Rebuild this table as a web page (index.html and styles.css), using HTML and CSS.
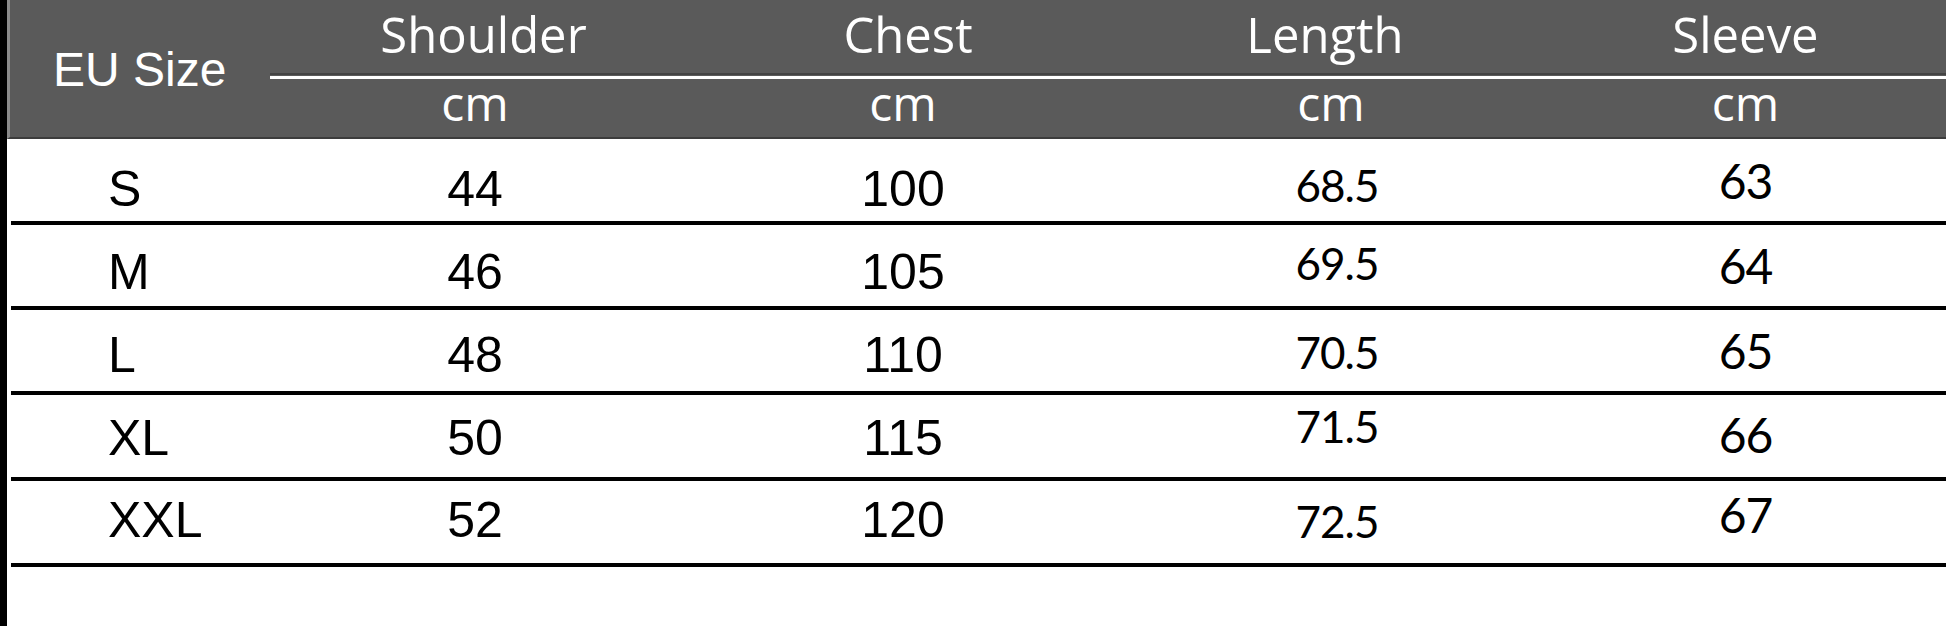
FILE: index.html
```html
<!DOCTYPE html>
<html lang="en">
<head>
<meta charset="utf-8">
<title>EU Size Chart</title>
<link rel="stylesheet" href="styles.css">
</head>
<body>
<div class="page">
  <div class="head">
    <div class="eu">EU Size</div>
    <div class="title t1">Shoulder</div>
    <div class="title t2">Chest</div>
    <div class="title t3">Length</div>
    <div class="title t4">Sleeve</div>
    <div class="divider"></div>
    <div class="unit">cm</div>
    <div class="unit">cm</div>
    <div class="unit">cm</div>
    <div class="unit">cm</div>
  </div>
  <div class="rows">
    <div class="row r1"><div class="size">S</div><div class="num">44</div><div class="num">100</div><div class="len">68.5</div><div class="slv">63</div></div>
    <div class="row r2"><div class="size">M</div><div class="num">46</div><div class="num">105</div><div class="len">69.5</div><div class="slv">64</div></div>
    <div class="row r3"><div class="size">L</div><div class="num">48</div><div class="num">110</div><div class="len">70.5</div><div class="slv">65</div></div>
    <div class="row r4"><div class="size">XL</div><div class="num">50</div><div class="num">115</div><div class="len">71.5</div><div class="slv">66</div></div>
    <div class="row r5"><div class="size">XXL</div><div class="num">52</div><div class="num">120</div><div class="len">72.5</div><div class="slv">67</div></div>
  </div>
</div>
</body>
</html>
```

FILE: styles.css
```css
html, body {
  margin: 0;
  padding: 0;
  background: #fff;
}

.page {
  box-sizing: border-box;
  min-height: 626px;
  border-left: 7px solid #000;
  overflow: hidden;
}

.head {
  display: grid;
  grid-template-columns: 251px 428px 428px 428px 1fr;
  grid-template-rows: 73px 6px 58px;
  background: #5a5a5a;
  border-left: 3px solid #8a8a8a;
  border-bottom: 2px solid #3c3c3c;
  color: #fff;
}

.eu {
  grid-row: 1 / 4;
  grid-column: 1;
  font-family: "Liberation Sans", Arial, sans-serif;
  font-size: 48px;
  line-height: 1;
  padding-top: 46px;
  padding-left: 43px;
  white-space: nowrap;
}

.title {
  grid-row: 1;
  font-family: "Open Sans", "Noto Sans", sans-serif;
  font-size: 49px;
  font-weight: 500;
  line-height: 1;
  padding-top: 10px;
  text-align: center;
  white-space: nowrap;
}

.t1 { grid-column: 2; padding-left: 17px; }
.t2 { grid-column: 3; padding-left: 10px; }
.t3 { grid-column: 4; padding-right: 12px; }
.t4 { grid-column: 5; }

.divider {
  grid-row: 2;
  grid-column: 2 / 6;
  margin-left: 9px;
  height: 4px;
  border-top: 2px solid #434343;
  background: linear-gradient(#5a5a5a 0 1px, #ffffff 1px 4px);
}

.unit {
  grid-row: 3;
  font-family: "Open Sans", "Noto Sans", sans-serif;
  font-size: 48px;
  font-weight: 500;
  line-height: 1;
  padding-top: 0;
  text-align: center;
}

.rows {
  margin-left: 4px;
}

.row {
  display: grid;
  grid-template-columns: 250px 428px 428px 428px 1fr;
  border-bottom: 4px solid #000;
  color: #000;
}

.size, .num {
  font-family: "Liberation Sans", Arial, sans-serif;
  font-size: 50px;
  line-height: 1;
  padding-top: var(--pa);
}

.size {
  padding-left: 97px;
  text-align: left;
}

.num {
  text-align: center;
}

.len, .slv {
  font-family: Lato, "Open Sans", sans-serif;
  line-height: 1;
  text-align: center;
  letter-spacing: -1px;
}

.len {
  font-size: 44px;
  padding-top: var(--pl);
  padding-left: 12px;
}

.slv {
  font-size: 48px;
  padding-top: var(--ps);
}

.r1 { height: 82px; --pa: 25px; --pl: 24px; --ps: 18px; }
.r2 { height: 81px; --pa: 22px; --pl: 16px; --ps: 17px; }
.r3 { height: 81px; --pa: 20px; --pl: 20px; --ps: 17px; }
.r4 { height: 82px; --pa: 18px; --pl: 9px;  --ps: 16px; }
.r5 { height: 82px; --pa: 14px; --pl: 18px; --ps: 10px; }
```
